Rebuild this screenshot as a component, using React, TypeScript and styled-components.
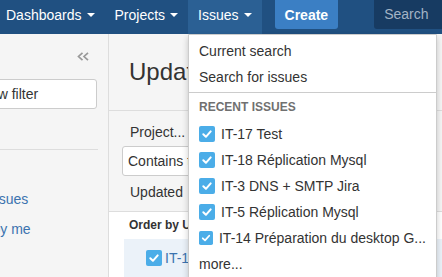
import styled, { createGlobalStyle } from "styled-components";
import { FC } from "react";

const GlobalStyle = createGlobalStyle`
  html, body {
    margin: 0;
    padding: 0;
    height: 100%;
  }
  body {
    font-family: "Liberation Sans", Arial, sans-serif;
    font-size: 14px;
    color: #333;
    overflow: hidden;
  }
  #root {
    height: 100%;
  }
`;

const recentIssues = [
  "IT-17 Test",
  "IT-18 Réplication Mysql",
  "IT-3 DNS + SMTP Jira",
  "IT-5 Réplication Mysql",
  "IT-14 Préparation du desktop G...",
];

const TaskIcon: FC = () => (
  <svg width="16" height="16" viewBox="0 0 16 16">
    <rect x="0" y="0" width="16" height="16" rx="2" fill="#4bade8" />
    <path d="M4.3 8.3 L6.9 10.8 L11.7 5.4" stroke="#fff" strokeWidth="2" fill="none" strokeLinecap="round" strokeLinejoin="round" />
  </svg>
);

const CollapseIcon: FC = () => (
  <svg width="12" height="9" viewBox="0 0 12 9">
    <path d="M5.5 0.8 L1.5 4.5 L5.5 8.2 M11 0.8 L7 4.5 L11 8.2" stroke="#999" strokeWidth="1.7" fill="none" />
  </svg>
);

export default function App() {
  return (
    <Page>
      <GlobalStyle />
      <Header>
        <Nav>
          <NavItem>Dashboards<Caret /></NavItem>
          <NavItem>Projects<Caret /></NavItem>
          <NavItem $active>Issues<Caret /></NavItem>
        </Nav>
        <CreateButton>Create</CreateButton>
        <SearchBox>Search</SearchBox>
      </Header>

      <Body>
        <Sidebar>
          <SidebarInner>
            <CollapseRow>
              <CollapseIcon />
            </CollapseRow>
            <NewFilterButton>New filter</NewFilterButton>
            <Divider />
            <FilterLink $first>My open issues</FilterLink>
            <FilterLink>Reported by me</FilterLink>
          </SidebarInner>
        </Sidebar>

        <Main>
          <TitleBar>
            <Title>Updated recently</Title>
          </TitleBar>
          <Criteria>
            <CriteriaButton>Project...</CriteriaButton>
            <TextInput>Contains text</TextInput>
            <CriteriaButton $gap>Updated</CriteriaButton>
          </Criteria>
          <Results>
            <OrderBy>Order by Updated</OrderBy>
            <IssueRow>
              <TaskIcon />
              <IssueKey>IT-17</IssueKey>
            </IssueRow>
          </Results>
        </Main>
      </Body>

      <Dropdown>
        <DropSection>
          <DropItem>Current search</DropItem>
          <DropItem>Search for issues</DropItem>
        </DropSection>
        <DropSection $divided>
          <SectionHeading>Recent issues</SectionHeading>
          {recentIssues.map((issue) => (
            <DropItem key={issue}>
              <TaskIcon />
              <span>{issue}</span>
            </DropItem>
          ))}
          <DropItem>more...</DropItem>
        </DropSection>
      </Dropdown>
    </Page>
  );
}

const Page = styled.div`
  position: relative;
  height: 100%;
  overflow: hidden;
  background: #f5f5f5;
`;

const Header = styled.header`
  display: flex;
  align-items: flex-start;
  height: 34px;
  background: #205081;
  overflow: hidden;
`;

const Nav = styled.nav`
  display: flex;
  margin-left: -4px;
`;

const NavItem = styled.div<{ $active?: boolean }>`
  display: flex;
  align-items: center;
  gap: 5px;
  box-sizing: border-box;
  height: 34px;
  padding: 0 10px 5px;
  color: #fff;
  background: ${(p) => (p.$active ? "#2b6094" : "transparent")};
  white-space: nowrap;
`;

const Caret = styled.span`
  width: 0;
  height: 0;
  margin-top: 1px;
  border-left: 4px solid transparent;
  border-right: 4px solid transparent;
  border-top: 4px solid #fff;
`;

const CreateButton = styled.button`
  margin-left: 13px;
  height: 29px;
  padding: 0 10px;
  border: 0;
  border-radius: 0 0 3px 3px;
  background: #3b7fc4;
  color: #fff;
  font-family: inherit;
  font-size: 14px;
  font-weight: bold;
`;

const SearchBox = styled.div`
  flex-shrink: 0;
  margin-left: 36px;
  width: 170px;
  height: 29px;
  box-sizing: border-box;
  padding-left: 10px;
  border-radius: 0 0 3px 3px;
  background: #173b62;
  color: #a3b3c5;
  line-height: 29px;
`;

const Body = styled.div`
  display: flex;
  height: calc(100% - 34px);
`;

const Sidebar = styled.aside`
  flex-shrink: 0;
  width: 108px;
  border-right: 1px solid #ddd;
  background: #f5f5f5;
  overflow: hidden;
`;

const SidebarInner = styled.div`
  width: 198px;
  margin-left: -90px;
  box-sizing: border-box;
  padding: 14px 11px 0;
`;

const CollapseRow = styled.div`
  display: flex;
  justify-content: flex-end;
  align-items: center;
  height: 16px;
  padding-right: 8px;
`;

const NewFilterButton = styled.button`
  display: block;
  width: 100%;
  height: 30px;
  margin-top: 15px;
  border: 1px solid #ccc;
  border-radius: 3px;
  background: #fff;
  color: #333;
  font-family: inherit;
  font-size: 14px;
`;

const Divider = styled.div`
  margin: 40px -1px 0 0;
  border-top: 1px solid #ddd;
`;

const FilterLink = styled.a<{ $first?: boolean }>`
  display: block;
  margin-top: ${(p) => (p.$first ? "34px" : "0")};
  padding-left: 10px;
  line-height: 30px;
  color: #3b73af;
  white-space: nowrap;
`;

const Main = styled.main`
  flex: 1;
  display: flex;
  flex-direction: column;
  min-width: 0;
`;

const TitleBar = styled.div`
  height: 99px;
  box-sizing: border-box;
  padding: 23px 20px 0;
  border-bottom: 1px solid #ddd;
`;

const Title = styled.h1`
  margin: 0;
  font-size: 24px;
  font-weight: normal;
  line-height: 29px;
  color: #333;
  white-space: nowrap;
`;

const Criteria = styled.div`
  display: flex;
  flex-direction: column;
  align-items: flex-start;
  padding: 11px 13px 9px;
  border-bottom: 1px solid #ddd;
`;

const CriteriaButton = styled.div<{ $gap?: boolean }>`
  margin-top: ${(p) => (p.$gap ? "6px" : "0")};
  padding-left: 8px;
  line-height: 20px;
  color: #333;
  white-space: nowrap;
`;

const TextInput = styled.div`
  margin-top: 4px;
  width: 300px;
  height: 30px;
  box-sizing: border-box;
  padding: 0 5px;
  border: 1px solid #ccc;
  border-radius: 3px;
  background: #fff;
  color: #333;
  line-height: 28px;
`;

const Results = styled.div`
  flex: 1;
  padding: 5px 0 0 15px;
  background: #fff;
`;

const OrderBy = styled.div`
  padding-left: 5px;
  font-size: 12px;
  font-weight: bold;
  line-height: 16px;
  color: #333;
  white-space: nowrap;
`;

const IssueRow = styled.div`
  display: flex;
  align-items: center;
  gap: 3px;
  margin-top: 6px;
  padding: 11px 10px 11px 22px;
  background: #ebf2f9;
`;

const IssueKey = styled.span`
  color: #3b73af;
`;

const Dropdown = styled.div`
  position: absolute;
  top: 34px;
  left: 188px;
  width: 249px;
  box-sizing: border-box;
  border: 1px solid #ccc;
  border-radius: 0 0 3px 3px;
  background: #fff;
  box-shadow: 0 3px 6px rgba(0, 0, 0, 0.2);
`;

const DropSection = styled.div<{ $divided?: boolean }>`
  padding: ${(p) => (p.$divided ? "0 0 4px" : "3px 0 2px")};
  border-top: ${(p) => (p.$divided ? "1px solid #ccc" : "0")};
`;

const SectionHeading = styled.div`
  padding: 6px 10px;
  font-size: 12px;
  font-weight: bold;
  line-height: 16px;
  text-transform: uppercase;
  color: #707070;
`;

const DropItem = styled.div`
  display: flex;
  align-items: center;
  gap: 6px;
  height: 26px;
  padding: 0 10px;
  color: #333;
  white-space: nowrap;
`;
